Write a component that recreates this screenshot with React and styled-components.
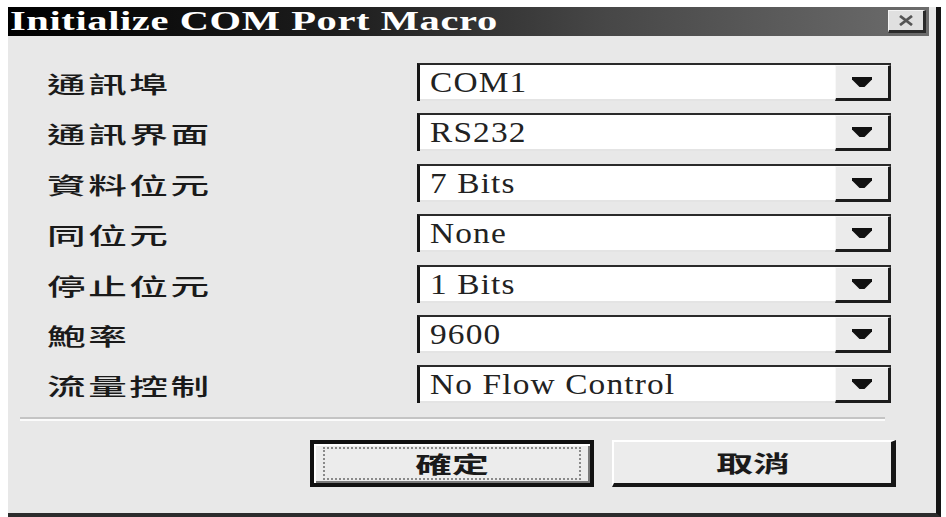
import React from "react";
import styled, { createGlobalStyle } from "styled-components";

const Global = createGlobalStyle`
  html, body { margin: 0; padding: 0; background: #ffffff; }
  body { width: 946px; height: 517px; overflow: hidden; }
`;

const Window = styled.div`
  margin: 7px 0 0 8px;
  width: 933px;
  height: 510px;
  box-sizing: border-box;
  background: #e8e8e8;
  border-right: 5px solid #141414;
  border-bottom: 4px solid #2c2c2c;
  display: flex;
  flex-direction: column;
`;

const TitleBar = styled.div`
  height: 29px;
  margin-right: 7px;
  background: linear-gradient(to right, #000 0%, #1c1c1c 35%, #474747 65%, #6c6c6c 100%);
  display: flex;
  align-items: center;
  justify-content: space-between;
  padding: 0 3px 0 2px;
  box-sizing: border-box;
`;

const Stretch = styled.span`
  display: inline-block;
  transform: scaleX(${(p) => p.$sx || 1});
  transform-origin: ${(p) => p.$origin || "left center"};
  white-space: nowrap;
`;

const TitleText = styled.div`
  color: #fff;
  font-family: "Liberation Serif", "Times New Roman", serif;
  font-weight: 700;
  font-size: 27px;
  line-height: 29px;
  letter-spacing: 0.4px;
`;

const CloseBox = styled.div`
  width: 38px;
  height: 23px;
  box-sizing: border-box;
  background: #e0e0e0;
  border-top: 1px solid #f4f4f4;
  border-left: 1px solid #f4f4f4;
  border-right: 3px solid #2a2a2a;
  border-bottom: 3px solid #2a2a2a;
  display: flex;
  align-items: center;
  justify-content: center;
`;

const Body = styled.div`
  display: flex;
  flex-direction: column;
  padding-top: 27px;
  flex: 1;
`;

const Form = styled.div`
  display: grid;
  grid-template-columns: 1fr 474px;
  grid-auto-rows: 38px;
  row-gap: 12.4px;
  align-items: center;
  margin: 0 45px 0 39px;
`;

const Label = styled.div`
  font-family: "Noto Sans CJK TC", "Noto Sans CJK SC", sans-serif;
  font-size: 23px;
  line-height: 38px;
  color: #1a1a1a;
  letter-spacing: 1.5px;
  font-weight: 500;
  padding-top: 2px;
`;

const Combo = styled.div`
  height: 38px;
  box-sizing: border-box;
  display: flex;
  background: #ffffff;
  border-top: 2px solid #2a2a2a;
  border-left: 3px solid #161616;
`;

const ComboText = styled.div`
  flex: 1;
  padding-left: 10px;
  font-family: "Liberation Serif", "Times New Roman", serif;
  font-size: 29px;
  letter-spacing: 1px;
  line-height: 34px;
  color: #222;
  border-bottom: 2px solid #e4e4e4;
`;

const DropButton = styled.div`
  width: 56px;
  box-sizing: border-box;
  background: #ebebeb;
  border-top: 1px solid #f8f8f8;
  border-left: 1px solid #f8f8f8;
  border-right: 3px solid #1c1c1c;
  border-bottom: 3px solid #1c1c1c;
  display: flex;
  align-items: center;
  justify-content: center;
`;

const Separator = styled.div`
  margin: 13.6px 51px 0 12px;
  height: 4px;
  border-top: 2px solid #c4c4c4;
  border-bottom: 2px solid #fbfbfb;
  box-sizing: border-box;
`;

const ButtonRow = styled.div`
  display: flex;
  justify-content: flex-end;
  gap: 18px;
  padding-right: 40px;
  margin-top: 19px;
`;

const BaseButton = styled.div`
  width: 284px;
  height: 47px;
  box-sizing: border-box;
  background: #ececec;
  display: flex;
  align-items: center;
  justify-content: center;
  font-family: "Noto Sans CJK TC", "Noto Sans CJK SC", sans-serif;
  font-weight: 700;
  font-size: 23px;
  color: #1a1a1a;
  position: relative;
`;

const DefaultButton = styled(BaseButton)`
  border: 4px solid #111;
  box-shadow: inset 2px 2px 0 #ffffff, inset -2px -2px 0 #7a7a7a;
  &::after {
    content: "";
    position: absolute;
    inset: 3px 9px 3px 9px;
    border: 2px dotted #8a8a8a;
  }
`;

const CancelButton = styled(BaseButton)`
  border-top: 2px solid #ffffff;
  border-left: 2px solid #ffffff;
  border-right: 5px solid #161616;
  border-bottom: 4px solid #161616;
`;

const Arrow = () => (
  <svg width="20" height="10" viewBox="0 0 20 10">
    <polygon points="0,0 20,0 20,2.5 12.5,10 7.5,10 0,2.5" fill="#111" />
  </svg>
);

const CloseX = () => (
  <svg width="16" height="11" viewBox="0 0 16 11">
    <path d="M2 1 L14 10 M14 1 L2 10" stroke="#555" strokeWidth="2.8" />
  </svg>
);

const rows = [
  ["通訊埠", "COM1"],
  ["通訊界面", "RS232"],
  ["資料位元", "7 Bits"],
  ["同位元", "None"],
  ["停止位元", "1 Bits"],
  ["鮑率", "9600"],
  ["流量控制", "No Flow Control"],
];

export default function App() {
  return (
    <>
      <Global />
      <Window>
        <TitleBar>
          <TitleText>
            <Stretch $sx={1.5}>Initialize COM Port Macro</Stretch>
          </TitleText>
          <CloseBox>
            <CloseX />
          </CloseBox>
        </TitleBar>
        <Body>
          <Form>
            {rows.map(([label, value]) => (
              <React.Fragment key={label}>
                <Label>
                  <Stretch $sx={1.68}>{label}</Stretch>
                </Label>
                <Combo>
                  <ComboText>
                    <Stretch $sx={1.15}>{value}</Stretch>
                  </ComboText>
                  <DropButton>
                    <Arrow />
                  </DropButton>
                </Combo>
              </React.Fragment>
            ))}
          </Form>
          <Separator />
          <ButtonRow>
            <DefaultButton>
              <Stretch $sx={1.6} $origin="center">確定</Stretch>
            </DefaultButton>
            <CancelButton>
              <Stretch $sx={1.6} $origin="center">取消</Stretch>
            </CancelButton>
          </ButtonRow>
        </Body>
      </Window>
    </>
  );
}
